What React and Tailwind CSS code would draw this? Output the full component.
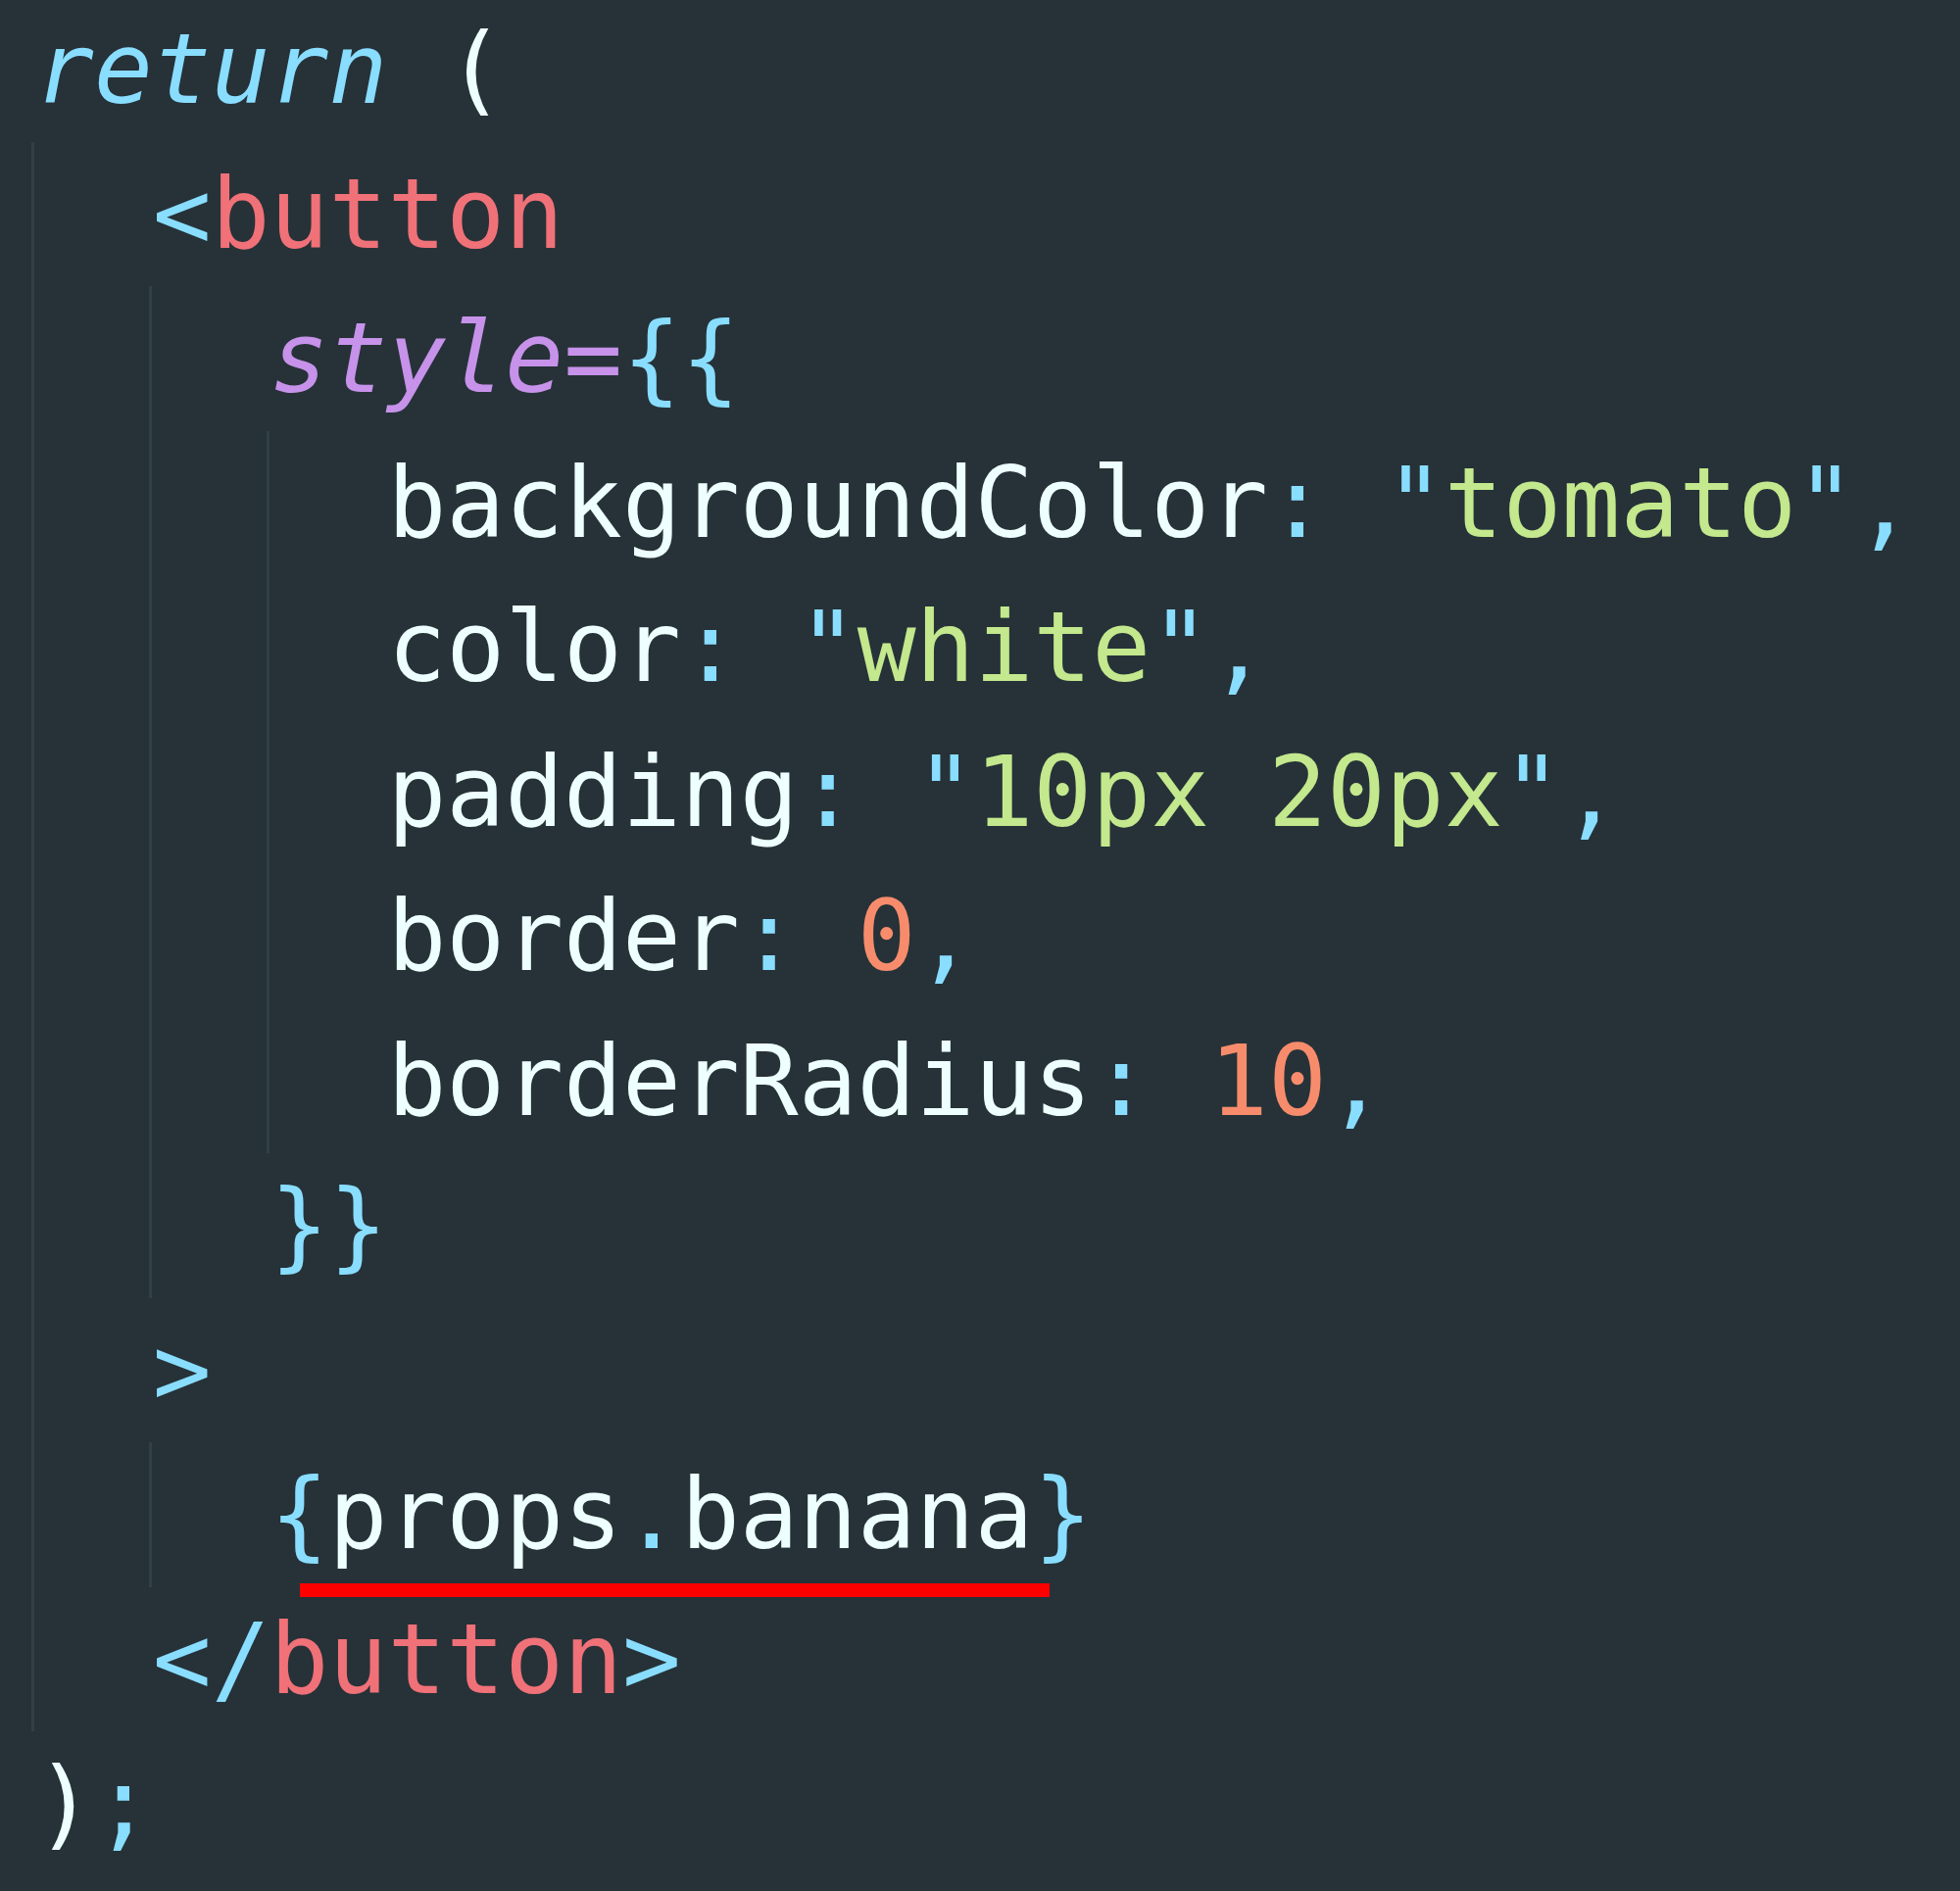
const c = {
  cyan: 'text-[#89ddff]',
  red: 'text-[#f07178]',
  purple: 'text-[#c792ea]',
  green: 'text-[#c3e88d]',
  orange: 'text-[#f78c6c]',
  plain: 'text-[#eeffff]',
};

function Line({ children }) {
  return <div className="relative h-[147.5px] whitespace-pre">{children}</div>;
}

// indent block: draws the indent guide on its left edge, children sit one level deeper
function Block({ children }) {
  return (
    <div className="-ml-1 border-l-[3px] border-[#313f47] pl-px">
      <div className="pl-[2ch]">{children}</div>
    </div>
  );
}

function Prop({ name, children }) {
  return (
    <Line>
      <span className={c.plain}>{name}</span>
      <span className={c.cyan}>: </span>
      {children}
      <span className={c.cyan}>,</span>
    </Line>
  );
}

function Str({ value }) {
  return (
    <>
      <span className={c.cyan}>"</span>
      <span className={c.green}>{value}</span>
      <span className={c.cyan}>"</span>
    </>
  );
}

export default function App() {
  return (
    <div className="h-[1930px] w-full overflow-hidden bg-[#263238] pl-[36px] text-[99.5px] leading-[147.5px] font-['DejaVu_Sans_Mono',monospace]">
      <div className="-mt-[3px]">
        <Line>
          <span className={`italic ${c.cyan}`}>return</span>
          <span className={c.plain}> (</span>
        </Line>
        <Block>
          <Line>
            <span className={c.cyan}>&lt;</span>
            <span className={c.red}>button</span>
          </Line>
          <Block>
            <Line>
              <span className={`italic ${c.purple}`}>style</span>
              <span className={c.purple}>=</span>
              <span className={c.cyan}>{'{{'}</span>
            </Line>
            <Block>
              <Prop name="backgroundColor"><Str value="tomato" /></Prop>
              <Prop name="color"><Str value="white" /></Prop>
              <Prop name="padding"><Str value="10px 20px" /></Prop>
              <Prop name="border"><span className={c.orange}>0</span></Prop>
              <Prop name="borderRadius"><span className={c.orange}>10</span></Prop>
            </Block>
            <Line>
              <span className={c.cyan}>{'}}'}</span>
            </Line>
          </Block>
          <Line>
            <span className={c.cyan}>&gt;</span>
          </Line>
          <Block>
            <Line>
              <span className={c.cyan}>{'{'}</span>
              <span className={c.plain}>props</span>
              <span className={c.cyan}>.</span>
              <span className={c.plain}>banana</span>
              <span className={c.cyan}>{'}'}</span>
              <span className="absolute left-[30px] top-[144px] h-[14px] w-[765px] bg-[#ff0000]" />
            </Line>
          </Block>
          <Line>
            <span className={c.cyan}>&lt;/</span>
            <span className={c.red}>button</span>
            <span className={c.cyan}>&gt;</span>
          </Line>
        </Block>
        <Line>
          <span className={c.plain}>)</span>
          <span className={c.cyan}>;</span>
        </Line>
      </div>
    </div>
  );
}
